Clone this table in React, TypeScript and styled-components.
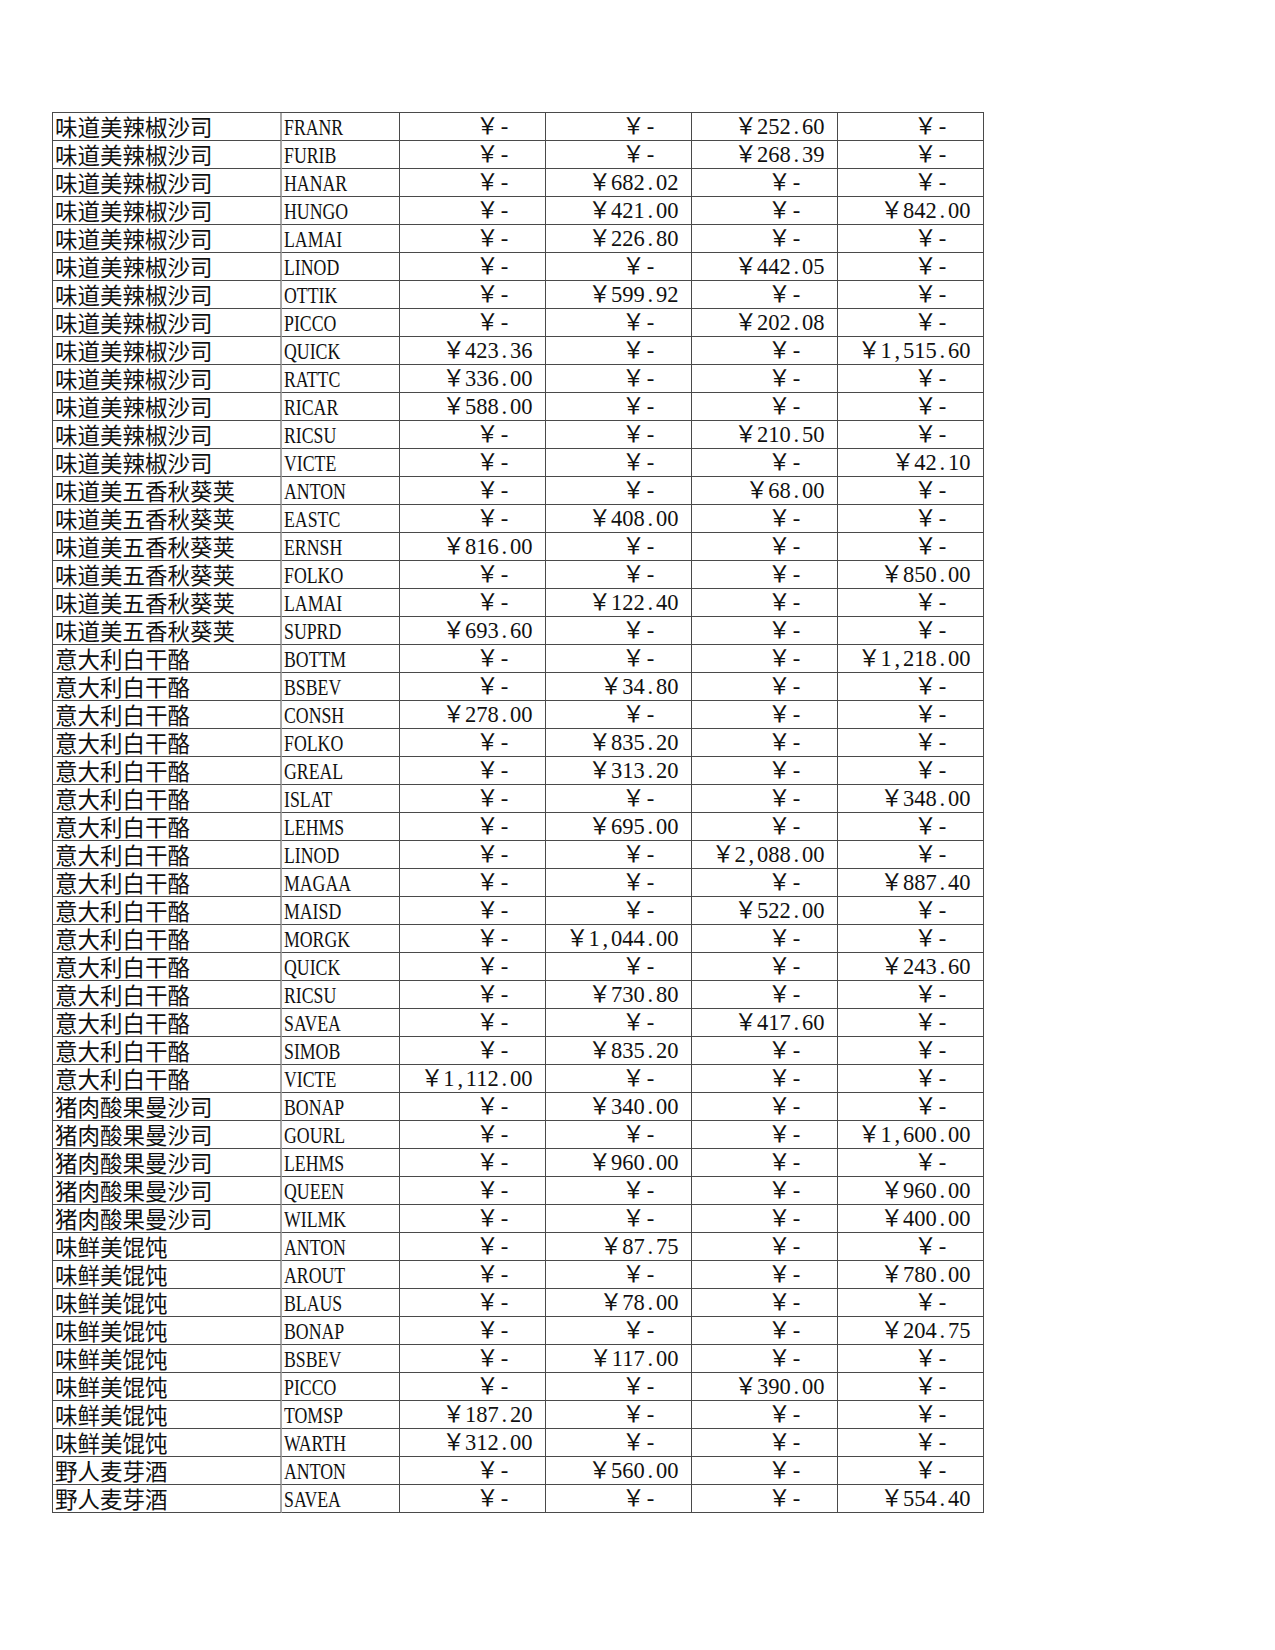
import React from "react";
import styled, { createGlobalStyle } from "styled-components";

const GlobalStyle = createGlobalStyle`
  html, body {
    margin: 0;
    padding: 0;
    background: #ffffff;
  }
  body {
    font-family: "Liberation Serif", "Noto Sans CJK SC", serif;
    color: #111111;
  }
`;

type Row = [string, string | null, string | null, string | null, string | null];
type Group = { name: string; rows: Row[] };

const groups: Group[] = [
  {
    name: "味道美辣椒沙司",
    rows: [
      ["FRANR", null, null, "252.60", null],
      ["FURIB", null, null, "268.39", null],
      ["HANAR", null, "682.02", null, null],
      ["HUNGO", null, "421.00", null, "842.00"],
      ["LAMAI", null, "226.80", null, null],
      ["LINOD", null, null, "442.05", null],
      ["OTTIK", null, "599.92", null, null],
      ["PICCO", null, null, "202.08", null],
      ["QUICK", "423.36", null, null, "1,515.60"],
      ["RATTC", "336.00", null, null, null],
      ["RICAR", "588.00", null, null, null],
      ["RICSU", null, null, "210.50", null],
      ["VICTE", null, null, null, "42.10"],
    ],
  },
  {
    name: "味道美五香秋葵荚",
    rows: [
      ["ANTON", null, null, "68.00", null],
      ["EASTC", null, "408.00", null, null],
      ["ERNSH", "816.00", null, null, null],
      ["FOLKO", null, null, null, "850.00"],
      ["LAMAI", null, "122.40", null, null],
      ["SUPRD", "693.60", null, null, null],
    ],
  },
  {
    name: "意大利白干酪",
    rows: [
      ["BOTTM", null, null, null, "1,218.00"],
      ["BSBEV", null, "34.80", null, null],
      ["CONSH", "278.00", null, null, null],
      ["FOLKO", null, "835.20", null, null],
      ["GREAL", null, "313.20", null, null],
      ["ISLAT", null, null, null, "348.00"],
      ["LEHMS", null, "695.00", null, null],
      ["LINOD", null, null, "2,088.00", null],
      ["MAGAA", null, null, null, "887.40"],
      ["MAISD", null, null, "522.00", null],
      ["MORGK", null, "1,044.00", null, null],
      ["QUICK", null, null, null, "243.60"],
      ["RICSU", null, "730.80", null, null],
      ["SAVEA", null, null, "417.60", null],
      ["SIMOB", null, "835.20", null, null],
      ["VICTE", "1,112.00", null, null, null],
    ],
  },
  {
    name: "猪肉酸果曼沙司",
    rows: [
      ["BONAP", null, "340.00", null, null],
      ["GOURL", null, null, null, "1,600.00"],
      ["LEHMS", null, "960.00", null, null],
      ["QUEEN", null, null, null, "960.00"],
      ["WILMK", null, null, null, "400.00"],
    ],
  },
  {
    name: "味鲜美馄饨",
    rows: [
      ["ANTON", null, "87.75", null, null],
      ["AROUT", null, null, null, "780.00"],
      ["BLAUS", null, "78.00", null, null],
      ["BONAP", null, null, null, "204.75"],
      ["BSBEV", null, "117.00", null, null],
      ["PICCO", null, null, "390.00", null],
      ["TOMSP", "187.20", null, null, null],
      ["WARTH", "312.00", null, null, null],
    ],
  },
  {
    name: "野人麦芽酒",
    rows: [
      ["ANTON", null, "560.00", null, null],
      ["SAVEA", null, null, null, "554.40"],
    ],
  },
];

const Page = styled.div`
  padding: 112px 0 0 52px;
  min-height: 1650px;
  box-sizing: border-box;
`;

const Sheet = styled.div`
  display: flex;
  flex-direction: column;
  width: 932px;
  border-top: 1px solid #4a4a4a;
  border-left: 1px solid #4a4a4a;
  box-sizing: border-box;
`;

const SheetRow = styled.div`
  display: grid;
  grid-template-columns: 229px 118px 146px 146px 146px 146px;
  height: 28px;
`;

const Cell = styled.div`
  box-sizing: border-box;
  height: 28px;
  border-right: 1px solid #4a4a4a;
  border-bottom: 1px solid #4a4a4a;
  font-size: 22.5px;
  line-height: 27px;
  white-space: nowrap;
`;

const NameCell = styled(Cell)`
  font-family: "Noto Sans CJK SC", "Liberation Serif", sans-serif;
  padding-left: 2px;
  border-right: 2px solid #a8a8a8;
`;

const CodeCell = styled(Cell)`
  padding-left: 2px;
  padding-top: 1px;
`;

const Code = styled.span`
  display: inline-block;
  font-size: 24px;
  line-height: 1;
  transform: scaleX(0.74);
  transform-origin: left center;
`;

const MoneyCell = styled(Cell)<{ $empty: boolean }>`
  text-align: right;
  padding-right: ${(p) => (p.$empty ? "35px" : "12.5px")};
`;

const Yen = styled.span`
  font-family: "Noto Sans CJK SC", sans-serif;
  display: inline-block;
  line-height: 1;
  width: 1em;
  text-align: center;
`;

const Punct = styled.span`
  display: inline-block;
  line-height: 1;
  width: 0.5em;
  text-align: center;
`;

function Money({ value }: { value: string | null }) {
  if (value === null) {
    return (
      <MoneyCell $empty={true}>
        <Yen>￥</Yen>
        <Punct>-</Punct>
      </MoneyCell>
    );
  }
  return (
    <MoneyCell $empty={false}>
      <Yen>￥</Yen>
      {value.split("").map((ch, i) =>
        ch === "." || ch === "," ? <Punct key={i}>{ch}</Punct> : <React.Fragment key={i}>{ch}</React.Fragment>
      )}
    </MoneyCell>
  );
}

export default function App() {
  return (
    <>
      <GlobalStyle />
      <Page>
        <Sheet>
          {groups.flatMap((g) =>
            g.rows.map((r, idx) => (
              <SheetRow key={g.name + r[0] + idx}>
                <NameCell>{g.name}</NameCell>
                <CodeCell>
                  <Code>{r[0]}</Code>
                </CodeCell>
                <Money value={r[1]} />
                <Money value={r[2]} />
                <Money value={r[3]} />
                <Money value={r[4]} />
              </SheetRow>
            ))
          )}
        </Sheet>
      </Page>
    </>
  );
}
